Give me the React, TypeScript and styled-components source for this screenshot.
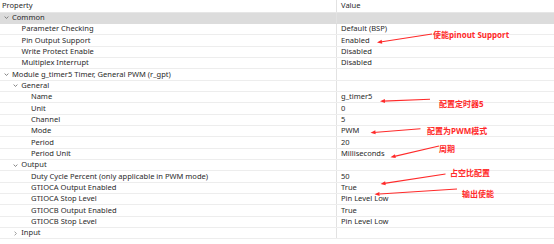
import React from "react";
import styled, { createGlobalStyle } from "styled-components";

const Global = createGlobalStyle`
  html, body { margin: 0; padding: 0; background: #ffffff; }
  body { width: 554px; height: 244px; overflow: hidden; }
`;

const Page = styled.div`
  position: relative;
  width: 554px;
  height: 244px;
  font-family: "Noto Sans", "Noto Sans CJK SC", sans-serif;
  font-size: 7.55px;
  color: #2a2a2a;
`;

const Table = styled.div`
  display: flex;
  flex-direction: column;
`;

const HeaderRow = styled.div`
  display: grid;
  grid-template-columns: 336px 1fr;
  height: 12.5px;
  box-sizing: border-box;
  border-bottom: 1px solid #e6e6e6;
`;

const HeaderCell = styled.div<{ $value?: boolean }>`
  display: flex;
  align-items: center;
  padding-left: ${(p) => (p.$value ? "4px" : "2px")};
  border-left: ${(p) => (p.$value ? "1px solid #e2e2e2" : "none")};
  line-height: 1;
`;

const Row = styled.div<{ $selected?: boolean }>`
  display: grid;
  grid-template-columns: 336px 1fr;
  height: 11.35px;
  box-sizing: border-box;
  border-bottom: 1px solid ${(p) => (p.$selected ? "#dcdcdc" : "#ededed")};
  background: ${(p) => (p.$selected ? "#dcdcdc" : "#ffffff")};
`;

const PropCell = styled.div<{ $indent: number }>`
  display: flex;
  align-items: center;
  padding-left: ${(p) => p.$indent}px;
  white-space: nowrap;
  line-height: 1;
`;

const ValueCell = styled.div`
  display: flex;
  align-items: center;
  padding-left: 4px;
  border-left: 1px solid #e2e2e2;
  white-space: nowrap;
  line-height: 1;
`;

const Twisty = styled.svg`
  width: 5px;
  height: 5px;
  margin-right: 3px;
  flex: none;
`;

const Overlay = styled.svg`
  position: absolute;
  left: 0;
  top: 0;
  width: 554px;
  height: 244px;
  pointer-events: none;
`;

const Note = styled.span<{ $x: number; $y: number }>`
  position: absolute;
  left: ${(p) => p.$x}px;
  top: ${(p) => p.$y}px;
  font-family: "Noto Sans", "Noto Sans CJK SC", sans-serif;
  font-weight: 700;
  font-size: 8px;
  line-height: 1;
  color: #ff2a2a;
  white-space: nowrap;
`;

type Item = {
  label: string;
  value?: string;
  level: number;
  group?: "open" | "closed";
  selected?: boolean;
};

const items: Item[] = [
  { label: "Common", level: 0, group: "open", selected: true },
  { label: "Parameter Checking", value: "Default (BSP)", level: 1 },
  { label: "Pin Output Support", value: "Enabled", level: 1 },
  { label: "Write Protect Enable", value: "Disabled", level: 1 },
  { label: "Multiplex Interrupt", value: "Disabled", level: 1 },
  { label: "Module g_timer5 Timer, General PWM (r_gpt)", level: 0, group: "open" },
  { label: "General", level: 1, group: "open" },
  { label: "Name", value: "g_timer5", level: 2 },
  { label: "Unit", value: "0", level: 2 },
  { label: "Channel", value: "5", level: 2 },
  { label: "Mode", value: "PWM", level: 2 },
  { label: "Period", value: "20", level: 2 },
  { label: "Period Unit", value: "Milliseconds", level: 2 },
  { label: "Output", level: 1, group: "open" },
  { label: "Duty Cycle Percent (only applicable in PWM mode)", value: "50", level: 2 },
  { label: "GTIOCA Output Enabled", value: "True", level: 2 },
  { label: "GTIOCA Stop Level", value: "Pin Level Low", level: 2 },
  { label: "GTIOCB Output Enabled", value: "True", level: 2 },
  { label: "GTIOCB Stop Level", value: "Pin Level Low", level: 2 },
  { label: "Input", level: 1, group: "closed" },
];

const Chevron: React.FC<{ open: boolean }> = ({ open }) => (
  <Twisty viewBox="0 0 5 5">
    {open ? (
      <path d="M0.6 1.6 L2.5 3.4 L4.4 1.6" fill="none" stroke="#666" strokeWidth="0.8" />
    ) : (
      <path d="M1.6 0.6 L3.4 2.5 L1.6 4.4" fill="none" stroke="#888" strokeWidth="0.8" />
    )}
  </Twisty>
);

const indentFor = (it: Item) => {
  const base = 4 + it.level * 9.3;
  return it.group ? base : base + 8.3;
};

type Arrow = { x1: number; y1: number; x2: number; y2: number };

const arrows: Arrow[] = [
  { x1: 432, y1: 34, x2: 377, y2: 42.5 },
  { x1: 430, y1: 99.3, x2: 380, y2: 101.2 },
  { x1: 420.5, y1: 128.7, x2: 370.5, y2: 132.7 },
  { x1: 439, y1: 146, x2: 390.5, y2: 157.3 },
  { x1: 445.5, y1: 174, x2: 380.5, y2: 184 },
  { x1: 457, y1: 189, x2: 374.5, y2: 194.3 },
];

const head = (a: Arrow) => {
  const dx = a.x2 - a.x1;
  const dy = a.y2 - a.y1;
  const len = Math.hypot(dx, dy);
  const ux = dx / len;
  const uy = dy / len;
  const L = 5;
  const W = 2;
  const bx = a.x2 - ux * L;
  const by = a.y2 - uy * L;
  return `${a.x2},${a.y2} ${bx - uy * W},${by + ux * W} ${bx + uy * W},${by - ux * W}`;
};

const notes = [
  { x: 433, y: 31, text: "使能pinout Support" },
  { x: 439, y: 100, text: "配置定时器5" },
  { x: 427, y: 127, text: "配置为PWM模式" },
  { x: 439, y: 145, text: "周期" },
  { x: 450, y: 168.5, text: "占空比配置" },
  { x: 462, y: 190, text: "输出使能" },
];

export default function App() {
  return (
    <Page>
      <Global />
      <Table>
        <HeaderRow>
          <HeaderCell>Property</HeaderCell>
          <HeaderCell $value>Value</HeaderCell>
        </HeaderRow>
        {items.map((it) => (
          <Row key={it.label} $selected={it.selected}>
            <PropCell $indent={indentFor(it)}>
              {it.group && <Chevron open={it.group === "open"} />}
              {it.label}
            </PropCell>
            <ValueCell>{it.value ?? ""}</ValueCell>
          </Row>
        ))}
      </Table>
      <Overlay viewBox="0 0 554 244">
        {arrows.map((a, i) => (
          <g key={i}>
            <line
              x1={a.x1}
              y1={a.y1}
              x2={a.x2 + (a.x1 - a.x2) * 0.06}
              y2={a.y2 + (a.y1 - a.y2) * 0.06}
              stroke="#ff2a2a"
              strokeWidth="1.1"
            />
            <polygon points={head(a)} fill="#ff2a2a" />
          </g>
        ))}
      </Overlay>
      {notes.map((n) => (
        <Note key={n.text} $x={n.x} $y={n.y}>
          {n.text}
        </Note>
      ))}
    </Page>
  );
}
